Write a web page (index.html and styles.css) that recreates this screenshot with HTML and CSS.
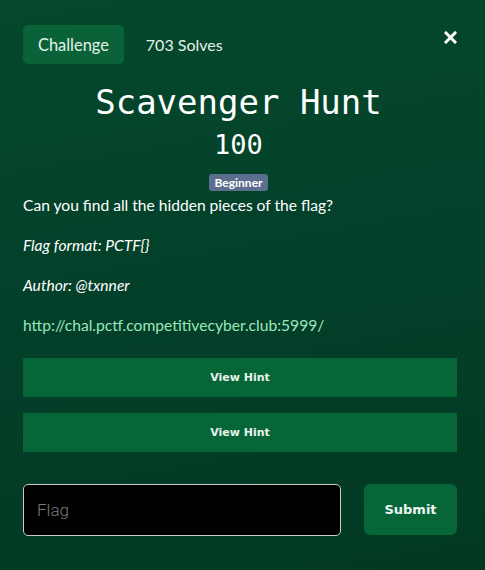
FILE: index.html
```html
<!DOCTYPE html>
<html lang="en">
<head>
<meta charset="utf-8">
<title>Scavenger Hunt</title>
<link rel="stylesheet" href="styles.css">
</head>
<body>
<div class="modal">
  <div class="tabs">
    <span class="tab active">Challenge</span>
    <span class="tab">703 Solves</span>
    <button class="close" aria-label="Close">
      <svg width="13" height="13" viewBox="0 0 13 13"><path d="M2 2 L11 11 M11 2 L2 11" stroke="#fff" stroke-width="3" stroke-linecap="square"/></svg>
    </button>
  </div>
  <h2 class="title">Scavenger Hunt</h2>
  <h3 class="value">100</h3>
  <div class="tags"><span class="badge">Beginner</span></div>
  <div class="desc">
    <p>Can you find all the hidden pieces of the flag?</p>
    <p><em>Flag format: PCTF{}</em></p>
    <p><em>Author: @txnner</em></p>
    <p><a href="#">http://chal.pctf.competitivecyber.club:5999/</a></p>
  </div>
  <div class="hints">
    <button class="hint">View Hint</button>
    <button class="hint">View Hint</button>
  </div>
  <div class="submit-row">
    <input class="flag" type="text" placeholder="Flag">
    <button class="submit">Submit</button>
  </div>
</div>
</body>
</html>
```
FILE: styles.css
```css
html, body {
  margin: 0;
  height: 100%;
}
body {
  background: linear-gradient(170deg, #04492b 0%, #03402a 50%, #023821 100%);
  font-family: Lato, "Open Sans", sans-serif;
  color: #fff;
}
.modal {
  padding: 25px 28px 0 23px;
}
.tabs {
  display: flex;
  align-items: center;
  height: 39px;
}
.tab {
  font-size: 16px;
  color: #e4f2ea;
  padding: 0 15px;
  line-height: 39px;
  border-radius: 5px;
}
.tab.active {
  font-size: 16.4px;
  background: #0a6338;
  margin-right: 7px;
}
.close {
  margin-left: auto;
  align-self: flex-start;
  margin-top: 6px;
  margin-right: 0;
  background: none;
  border: 0;
  padding: 0;
  width: 13px;
  height: 13px;
  display: flex;
}
.title {
  margin: 20px 0 0;
  text-align: center;
  font-family: "DejaVu Sans Mono", monospace;
  font-weight: normal;
  font-size: 34px;
  line-height: 36px;
  color: #fff;
  padding-right: 3px;
}
.value {
  margin: 9px 0 0;
  text-align: center;
  font-family: "DejaVu Sans Mono", monospace;
  font-weight: normal;
  font-size: 27px;
  line-height: 32px;
  padding-right: 3px;
}
.tags {
  display: flex;
  justify-content: center;
  margin-top: 13px;
  padding-right: 3px;
}
.badge {
  background: #5b6e8d;
  color: #fff;
  font-weight: bold;
  font-size: 12px;
  line-height: 17px;
  padding: 0 5px;
  border-radius: 3px;
}
.desc {
  margin-top: 2px;
  font-size: 15.6px;
  line-height: 24px;
  color: #fff;
}
.desc p {
  margin: 0 0 16px;
}
.desc a {
  color: #9be6bb;
  text-decoration: none;
}
.hints {
  display: flex;
  flex-direction: column;
  gap: 16px;
  margin-top: 21px;
}
.hint {
  height: 39px;
  background: #066638;
  border: 0;
  color: #e8f3ec;
  font-family: "DejaVu Sans", Verdana, sans-serif;
  font-weight: bold;
  font-size: 11px;
  padding: 0;
}
.submit-row {
  display: flex;
  gap: 23px;
  margin-top: 32px;
}
.flag {
  flex: 1;
  height: 52px;
  box-sizing: border-box;
  background: #000;
  border: 1px solid #c9ccc9;
  border-radius: 5px;
  padding: 0 13px;
  font-family: Roboto, sans-serif;
  font-weight: 300;
  font-size: 17px;
  color: #fff;
}
.flag::placeholder {
  color: #7a7a7a;
}
.submit {
  width: 93px;
  height: 51px;
  background: #066638;
  border: 0;
  border-radius: 6px;
  color: #eef6f1;
  font-family: "DejaVu Sans", Verdana, sans-serif;
  font-weight: bold;
  font-size: 13px;
  padding: 0;
}
```
